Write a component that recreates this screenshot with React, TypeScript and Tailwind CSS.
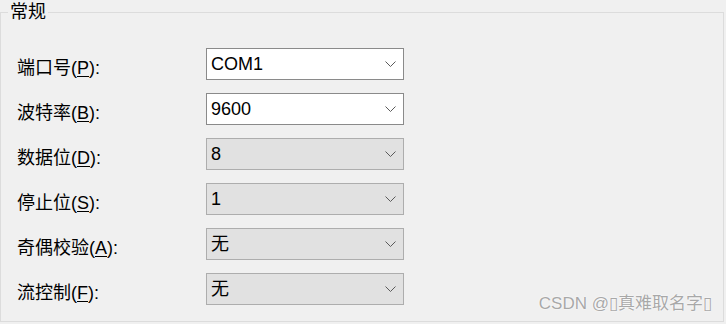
import React from "react";

const rows: { label: string; key: string; value: string; editable: boolean }[] = [
  { label: "端口号", key: "P", value: "COM1", editable: true },
  { label: "波特率", key: "B", value: "9600", editable: true },
  { label: "数据位", key: "D", value: "8", editable: false },
  { label: "停止位", key: "S", value: "1", editable: false },
  { label: "奇偶校验", key: "A", value: "无", editable: false },
  { label: "流控制", key: "F", value: "无", editable: false },
];

function Chevron() {
  return (
    <svg width="11" height="6" viewBox="0 0 11 6" className="shrink-0">
      <path d="M0.5 0.5 L5.5 5.5 L10.5 0.5" fill="none" stroke="#5a5a5a" strokeWidth="1" />
    </svg>
  );
}

export default function App() {
  const font = {
    fontFamily: '"Liberation Sans", "Noto Sans CJK SC", sans-serif',
  };
  return (
    <div className="relative w-[726px] h-[324px] bg-[#f0f0f0] text-black" style={font}>
      <fieldset className="w-[724px] h-[322px] border border-[#dcdcdc]">
        <legend className="ml-[7px] px-[2px] text-[18px] leading-[24px]">常规</legend>
        <div className="mt-[24px] pl-[16px] flex flex-col gap-[13px]">
          {rows.map((r) => (
            <div key={r.key} className="flex items-start h-[32px]">
              <div className="w-[189px] pt-[8px] text-[18px] leading-[24px]">
                {r.label}(<span className="underline underline-offset-2 decoration-1">{r.key}</span>):
              </div>
              <div
                className={
                  "w-[198px] h-[32px] border flex items-center pl-[4px] pr-[7px] " +
                  (r.editable ? "bg-white border-[#8a8a8a]" : "bg-[#e1e1e1] border-[#adadad]")
                }
              >
                <span className="flex-1 text-[18px] leading-[24px]">{r.value}</span>
                <Chevron />
              </div>
            </div>
          ))}
        </div>
      </fieldset>
      <div
        className="absolute right-[14px] bottom-[10px] text-[17px] leading-[20px] text-[#a8a8a8]"
        style={{ textShadow: "0 0 2px #ffffff, 0 0 1px #ffffff" }}
      >
        CSDN @▯真难取名字▯
      </div>
    </div>
  );
}
